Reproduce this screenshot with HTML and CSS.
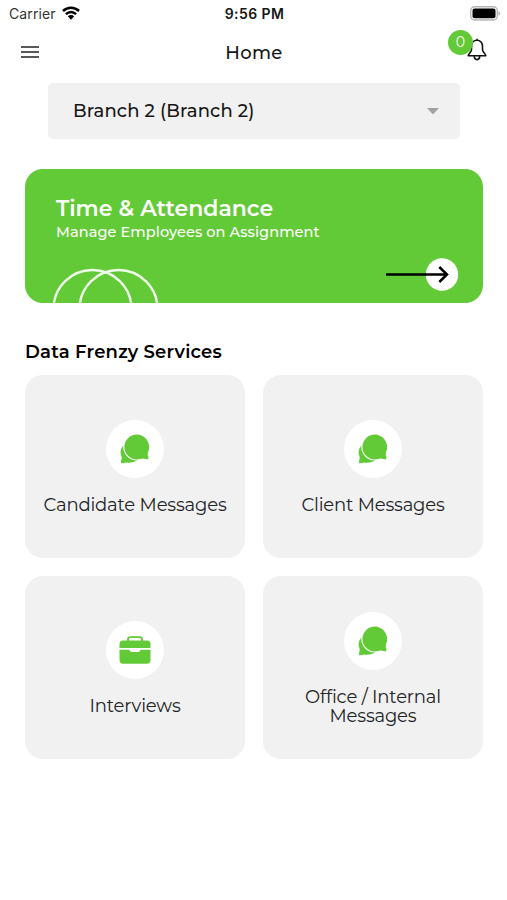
FILE: index.html
```html
<!DOCTYPE html>
<html lang="en">

<head>
    <meta charset="UTF-8">
    <meta name="viewport" content="width=device-width, initial-scale=1.0">
    <title>Home</title>
    <link rel="stylesheet" href="styles.css">
</head>

<body>
    <!-- Shared icon shapes -->
    <svg class="sprite" width="0" height="0" aria-hidden="true">
        <symbol id="icon-chat" viewBox="0 0 30 30">
            <path d="M3 12C.8 14.500 .3 17.500 .8 20C1 21.500 1.800 22.500 1.700 23.800L1 27.800C.8 29.200 1.500 29.600 2.600 29.300L6 28.400C9 29 14.500 28.800 17.500 26.300L14 22L8 14Z" />
            <path d="M16.800 .6A12.400 12.400 0 0 0 16.800 25.400C19 25.400 21 24.600 22.800 24.500L26.800 25.300C28.300 25.400 28.700 24.600 28.400 23.300L27.700 20.500C27.500 19 28.200 18 28.600 16.700A12.400 12.400 0 0 0 16.800 .6Z" stroke="#fff" stroke-width="2.200" paint-order="stroke" />
        </symbol>
    </svg>

    <div class="status-bar">
        <div class="status-left">
            <span class="carrier">Carrier</span>
            <svg class="wifi" viewBox="0 0 18 14" width="18" height="14">
                <path d="M1 5C5.500 .7 12.500 .7 17 5M3.900 8.200C7 5.300 11 5.300 14.100 8.200" fill="none" stroke="#000" stroke-width="2.500" />
                <path d="M5.800 10.300Q9 7.900 12.200 10.300L9 13.700Z" />
            </svg>
        </div>
        <span class="time">9:56 PM</span>
        <svg class="battery" viewBox="0 0 30 15" width="30" height="15">
            <rect x=".7" y=".7" width="26.600" height="13.300" rx="4" fill="#fff" stroke="#b5b5b5" stroke-width="1.400" />
            <rect x="2.500" y="2.500" width="23" height="9.700" rx="2" />
            <path d="M28.500 5.200Q30 6 30 7.500T28.500 9.700Z" fill="#aaa" />
        </svg>
    </div>

    <header class="app-bar">
        <svg class="menu-icon" viewBox="0 0 18 12" width="18" height="12">
            <path d="M0 1H18M0 6H18M0 11H18" stroke="#222" stroke-width="1.700" />
        </svg>
        <h1>Home</h1>
        <div class="notifications">
            <svg class="bell" viewBox="0 0 20 23" width="20" height="23">
                <path d="M10 2.300C6.500 2.300 4.500 5 4.500 8.300V11.500C4.500 14.300 1.500 15.500 1.200 17.800H18.800C18.500 15.500 15.500 14.300 15.500 11.500V8.300C15.500 5 13.500 2.300 10 2.300ZM10 2.300V.8M7.300 18C7.300 22.800 12.700 22.800 12.700 18" fill="none" stroke="#111" stroke-width="1.600" stroke-linejoin="round" />
            </svg>
            <span class="badge">0</span>
        </div>
    </header>

    <main>
        <div class="branch-select">
            <span>Branch 2 (Branch 2)</span>
            <svg viewBox="0 0 12 7" width="12" height="7">
                <path d="M0 0H12L6 6.500Z" fill="#a2a2a2" />
            </svg>
        </div>

        <section class="banner">
            <h2>Time &amp; Attendance</h2>
            <p>Manage Employees on Assignment</p>
            <div class="banner-art">
                <svg class="rings" viewBox="0 0 108 35" width="108" height="35">
                    <g fill="none" stroke="#effbe9" stroke-width="2.400">
                        <circle cx="39.500" cy="41" r="39" />
                        <circle cx="65.500" cy="41" r="39" />
                    </g>
                </svg>
                <svg class="arrow" viewBox="0 0 73 34" width="73" height="34">
                    <circle cx="56" cy="17.500" r="16.200" fill="#fff" />
                    <path d="M0 17.500H61M53.300 10L61 17.500L53.300 25" fill="none" stroke="#000" stroke-width="2.500" />
                </svg>
            </div>
        </section>

        <h3>Data Frenzy Services</h3>
        <div class="services">
            <div class="card">
                <div class="icon"><svg width="30" height="30"><use href="#icon-chat" /></svg></div>
                <span class="label">Candidate Messages</span>
            </div>
            <div class="card">
                <div class="icon"><svg width="30" height="30"><use href="#icon-chat" /></svg></div>
                <span class="label">Client Messages</span>
            </div>
            <div class="card">
                <div class="icon">
                    <svg viewBox="0 0 32 28" width="32" height="28">
                        <path d="M9 5V3.500Q9 1.200 11.500 1.200H20.500Q23 1.200 23 3.500V5" fill="none" stroke="#63ca37" stroke-width="1.800" />
                        <path d="M4 4.500H28Q31.500 4.500 31.500 8V12H.5V8Q.5 4.500 4 4.500Z" />
                        <path d="M.5 13.800H10.300Q11 16 13 16H19Q21 16 21.700 13.800H31.500V24Q31.500 27.700 28 27.700H4Q.5 27.700 .5 24Z" />
                    </svg>
                </div>
                <span class="label">Interviews</span>
            </div>
            <div class="card">
                <div class="icon"><svg width="30" height="30"><use href="#icon-chat" /></svg></div>
                <span class="label">Office / Internal<br>Messages</span>
            </div>
        </div>
    </main>
</body>

</html>
```
FILE: styles.css
```css
* {
    margin: 0;
    padding: 0;
    box-sizing: border-box;
}

body {
    font-family: Montserrat, Inter, sans-serif;
    background-color: #FFFFFF;
    color: #161616;
    min-height: 100vh;
}

svg {
    display: block;
}

.sprite {
    position: absolute;
}

/* Status bar */
.status-bar {
    display: grid;
    grid-template-columns: 1fr auto 1fr;
    align-items: center;
    height: 27px;
    padding: 0 7px 0 9px;
    font-family: Inter, sans-serif;
    font-size: 14px;
}

.status-left {
    display: flex;
    align-items: center;
    gap: 6px;
}

.carrier {
    color: #333;
    letter-spacing: 0.1px;
}

.wifi {
    margin-bottom: 2px;
}

.time {
    font-weight: 600;
    letter-spacing: 0.4px;
}

.battery {
    justify-self: end;
}

/* Title bar */
.app-bar {
    display: grid;
    grid-template-columns: 1fr auto 1fr;
    align-items: center;
    height: 50px;
    padding: 0 20px 0 21px;
}

.app-bar h1 {
    padding-top: 2px;
    font-size: 18px;
    font-weight: 500;
    letter-spacing: 0.3px;
}

.notifications {
    position: relative;
    justify-self: end;
}

.bell {
    margin-top: -5px;
}

.badge {
    position: absolute;
    top: -13px;
    left: -19px;
    width: 25px;
    height: 25px;
    border-radius: 50%;
    background-color: #63CA37;
    color: #FFFFFF;
    font-size: 14px;
    line-height: 25px;
    text-align: center;
}

main {
    padding: 6px 24px 0 25px;
}

.branch-select {
    display: flex;
    align-items: center;
    justify-content: space-between;
    height: 56px;
    margin: 0 23px;
    padding: 0 21px 0 25px;
    border-radius: 5px;
    background-color: #F1F1F1;
    font-size: 18px;
    font-weight: 500;
    letter-spacing: 0.15px;
}

/* Green banner */
.banner {
    display: flex;
    flex-direction: column;
    height: 134px;
    margin-top: 30px;
    padding: 27px 24px 0 28px;
    border-radius: 18px;
    background-color: #63CA37;
    color: #FFFFFF;
    overflow: hidden;
}

.banner h2 {
    padding-left: 3px;
    font-size: 22px;
    font-weight: 600;
    line-height: 26px;
}

.banner p {
    padding-left: 3px;
    font-size: 14.5px;
    font-weight: 500;
    line-height: 20px;
    letter-spacing: 0.1px;
}

.banner-art {
    display: flex;
    flex: 1;
    align-items: flex-end;
    justify-content: space-between;
}

.arrow {
    margin-bottom: 12px;
}

main h3 {
    margin: 38px 0 12px;
    font-size: 18px;
    font-weight: 600;
    line-height: 22px;
    letter-spacing: 0.22px;
    color: #000;
}

/* Service cards */
.services {
    display: grid;
    grid-template-columns: 1fr 1fr;
    grid-auto-rows: 183px;
    gap: 18px;
}

.card {
    display: flex;
    flex-direction: column;
    align-items: center;
    justify-content: center;
    gap: 18px;
    padding-top: 2px;
    border-radius: 18px;
    background-color: #F1F1F1;
}

.icon {
    display: flex;
    align-items: center;
    justify-content: center;
    width: 58px;
    height: 58px;
    border-radius: 50%;
    background-color: #FFFFFF;
    fill: #63CA37;
}

.label {
    font-size: 18px;
    line-height: 19px;
    letter-spacing: -0.17px;
    text-align: center;
    color: #222426;
}
```
